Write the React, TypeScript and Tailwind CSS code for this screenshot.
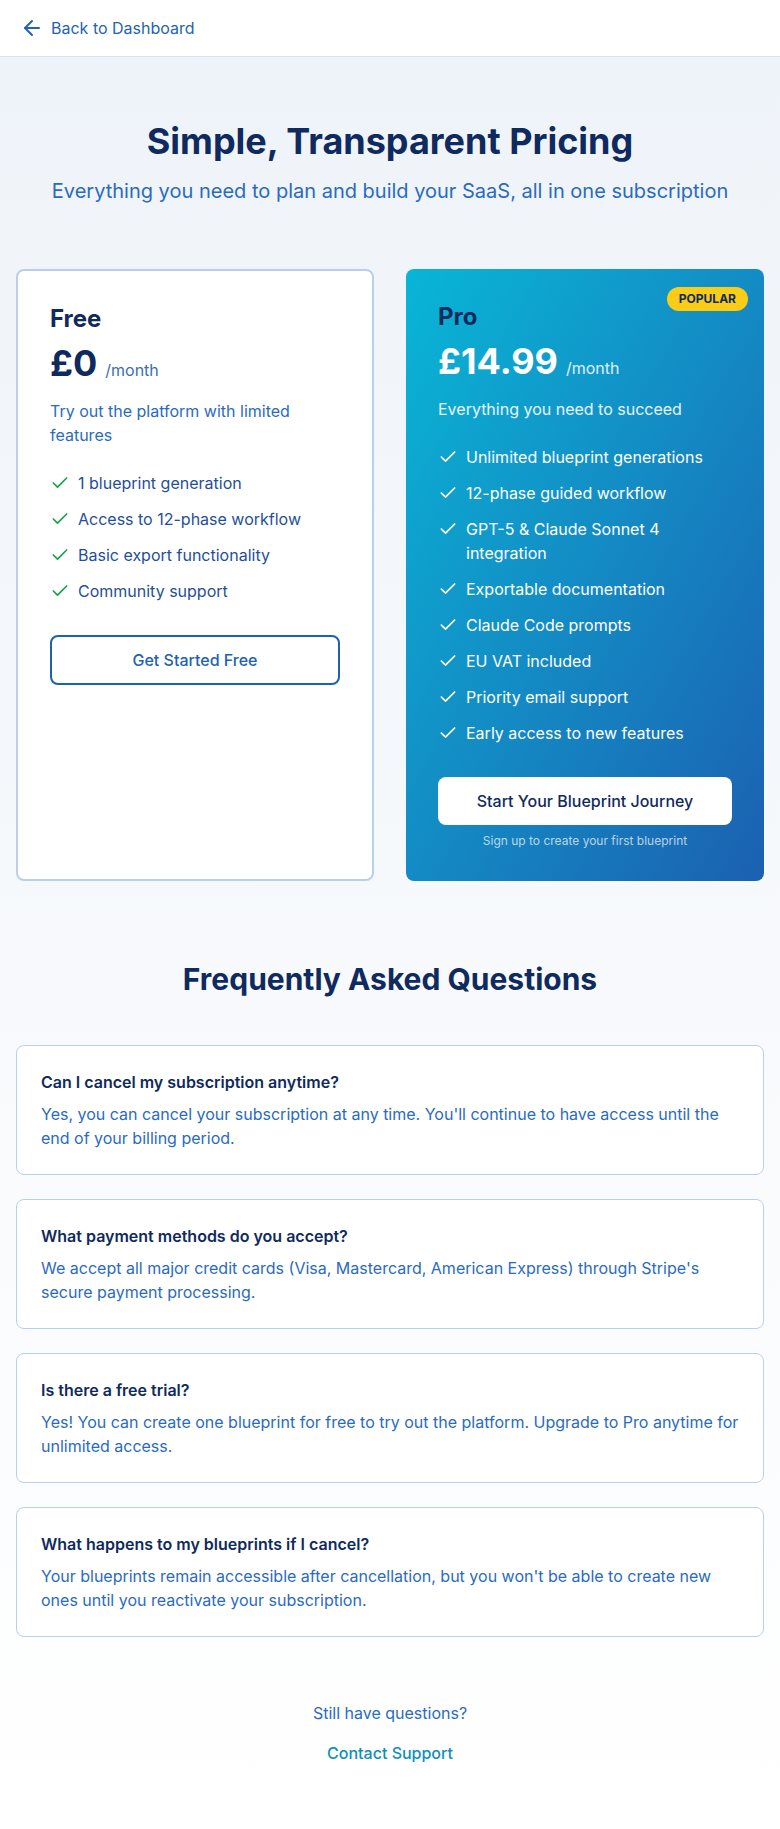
import React from "react";
import { ArrowLeft, Check } from "lucide-react";

const freeFeatures = [
  "1 blueprint generation",
  "Access to 12-phase workflow",
  "Basic export functionality",
  "Community support",
];

const proFeatures = [
  "Unlimited blueprint generations",
  "12-phase guided workflow",
  "GPT-5 & Claude Sonnet 4 integration",
  "Exportable documentation",
  "Claude Code prompts",
  "EU VAT included",
  "Priority email support",
  "Early access to new features",
];

const faqs = [
  {
    q: "Can I cancel my subscription anytime?",
    a: "Yes, you can cancel your subscription at any time. You'll continue to have access until the end of your billing period.",
  },
  {
    q: "What payment methods do you accept?",
    a: "We accept all major credit cards (Visa, Mastercard, American Express) through Stripe's secure payment processing.",
  },
  {
    q: "Is there a free trial?",
    a: "Yes! You can create one blueprint for free to try out the platform. Upgrade to Pro anytime for unlimited access.",
  },
  {
    q: "What happens to my blueprints if I cancel?",
    a: "Your blueprints remain accessible after cancellation, but you won't be able to create new ones until you reactivate your subscription.",
  },
];

export default function App() {
  return (
    <div
      className="min-h-screen bg-linear-to-b from-[#eef3f9] to-white"
      style={{ fontFamily: "Inter, 'Noto Sans', sans-serif" }}
    >
      <header className="bg-white border-b border-[#d7e3f1]">
        <div className="flex items-center gap-2 pl-5 py-4 h-14">
          <a href="#" className="flex items-center gap-[7px] text-[#2563b0] text-base">
            <ArrowLeft className="w-6 h-6" strokeWidth={2} />
            <span>Back to Dashboard</span>
          </a>
        </div>
      </header>

      <main className="px-4 pt-16 pb-16">
        <div className="text-center">
          <h1 className="text-4xl font-bold text-[#0f2a5e]">
            Simple, Transparent Pricing
          </h1>
          <p className="mt-4 text-xl text-[#2a6bbf]">
            Everything you need to plan and build your SaaS, all in one subscription
          </p>
        </div>

        <div className="mt-16 grid grid-cols-2 gap-8">
          {/* Free */}
          <div className="bg-white border-2 border-[#b9d0ea] rounded-lg p-8">
            <h2 className="text-2xl font-bold text-[#0f2a5e]">Free</h2>
            <div className="mt-2 flex items-baseline">
              <span className="text-4xl font-bold text-[#0f2a5e]">£0</span>
              <span className="ml-2 text-base text-[#3a6fb3]">/month</span>
            </div>
            <p className="mt-4 text-base text-[#2a6bbf]">
              Try out the platform with limited features
            </p>
            <ul className="mt-6 flex flex-col gap-3">
              {freeFeatures.map((f) => (
                <li key={f} className="flex items-start gap-2 text-base text-[#1f4f99]">
                  <Check className="w-5 h-5 mt-0.5 text-[#16a34a] shrink-0" strokeWidth={2} />
                  <span>{f}</span>
                </li>
              ))}
            </ul>
            <button className="mt-8 w-full border-2 border-[#1d62b0] rounded-lg py-[11px] text-base font-medium text-[#1d62b0]">
              Get Started Free
            </button>
          </div>

          {/* Pro */}
          <div className="relative rounded-lg p-8 bg-linear-to-br from-[#08b6d6] to-[#1b60b1]">
            <span className="absolute top-[18px] right-4 bg-[#facc15] text-[#0f2a5e] text-xs font-bold rounded-full px-3 py-1">
              POPULAR
            </span>
            <h2 className="text-2xl font-bold text-[#0f2a5e]">Pro</h2>
            <div className="mt-2 flex items-baseline">
              <span className="text-4xl font-bold text-white">£14.99</span>
              <span className="ml-2 text-base text-white/85">/month</span>
            </div>
            <p className="mt-4 text-base text-white/90">Everything you need to succeed</p>
            <ul className="mt-6 flex flex-col gap-3">
              {proFeatures.map((f) => (
                <li key={f} className="flex items-start gap-2 text-base text-white">
                  <Check className="w-5 h-5 mt-0.5 text-white shrink-0" strokeWidth={2} />
                  <span>{f}</span>
                </li>
              ))}
            </ul>
            <button className="mt-8 w-full bg-white rounded-lg py-3 text-base font-medium text-[#0f2a5e]">
              Start Your Blueprint Journey
            </button>
            <p className="mt-2 text-xs text-center text-white/70">
              Sign up to create your first blueprint
            </p>
          </div>
        </div>

        <section className="mt-20">
          <h2 className="text-3xl font-bold text-center text-[#0f2a5e]">
            Frequently Asked Questions
          </h2>
          <div className="mt-12 flex flex-col gap-6">
            {faqs.map((f) => (
              <div key={f.q} className="bg-white border border-[#b9d0ea] rounded-lg p-6">
                <h3 className="text-base font-semibold text-[#0f2a5e]">{f.q}</h3>
                <p className="mt-2 text-base text-[#2a6bbf]">{f.a}</p>
              </div>
            ))}
          </div>
        </section>

        <div className="mt-16 text-center">
          <p className="text-base text-[#2a6bbf]">Still have questions?</p>
          <a href="#" className="mt-4 inline-block text-base font-medium text-[#0e8fb8]">
            Contact Support
          </a>
        </div>
      </main>
    </div>
  );
}
